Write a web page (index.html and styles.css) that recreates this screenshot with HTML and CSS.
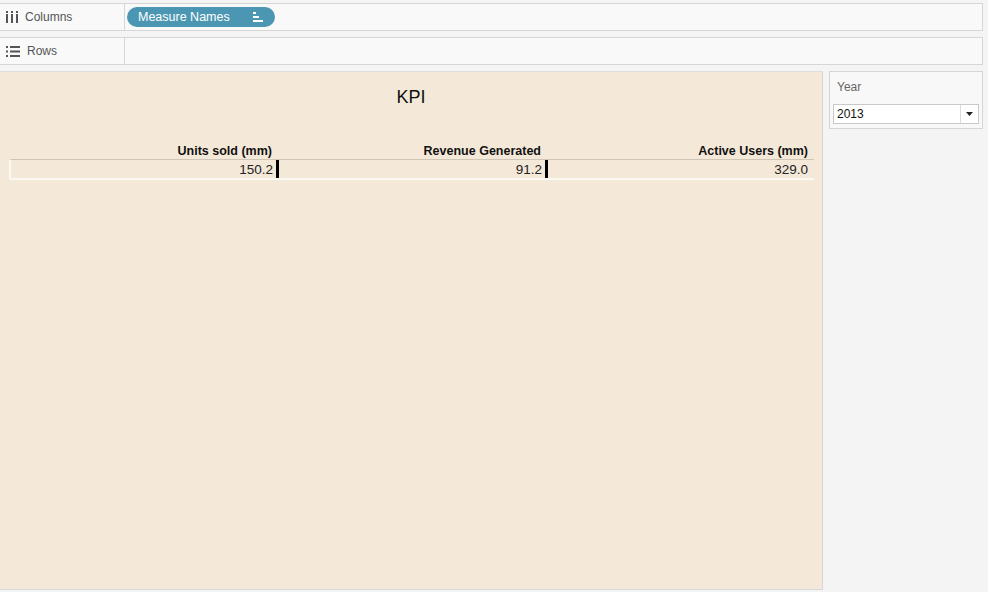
FILE: index.html
```html
<!DOCTYPE html>
<html>
<head>
<meta charset="utf-8">
<link rel="stylesheet" href="styles.css">
</head>
<body>
<div class="shelves">
  <div class="shelf">
    <div class="shelf-label">
      <svg class="shelf-icon" width="12" height="12" viewBox="0 0 12 12"><rect x="0" y="0" width="2" height="2" fill="#555"/><rect x="5" y="0" width="2" height="2" fill="#555"/><rect x="10" y="0" width="2" height="2" fill="#555"/><rect x="0" y="3" width="2" height="9" fill="#555"/><rect x="5" y="3" width="2" height="9" fill="#555"/><rect x="10" y="3" width="2" height="9" fill="#555"/></svg>
      <span>Columns</span>
    </div>
    <div class="shelf-body">
      <div class="pill">
        <span>Measure Names</span>
        <svg class="sort-icon" width="10" height="10" viewBox="0 0 10 10"><rect x="0" y="0" width="3" height="2" fill="#fff"/><rect x="0" y="4" width="6" height="2" fill="#fff"/><rect x="0" y="8" width="10" height="2" fill="#fff"/></svg>
      </div>
    </div>
  </div>
  <div class="shelf">
    <div class="shelf-label">
      <svg class="shelf-icon" width="14" height="11" viewBox="0 0 14 11"><rect x="0" y="0" width="2" height="2" fill="#555"/><rect x="4" y="0" width="10" height="2" fill="#555"/><rect x="0" y="4.5" width="2" height="2" fill="#555"/><rect x="4" y="4.5" width="10" height="2" fill="#555"/><rect x="0" y="9" width="2" height="2" fill="#555"/><rect x="4" y="9" width="10" height="2" fill="#555"/></svg>
      <span>Rows</span>
    </div>
    <div class="shelf-body"></div>
  </div>
</div>
<div class="main">
  <div class="pane">
    <div class="title">KPI</div>
    <div class="table">
      <div class="headers">
        <div class="cell c1 head">Units sold (mm)</div>
        <div class="cell c2 head">Revenue Generated</div>
        <div class="cell c3 head">Active Users (mm)</div>
      </div>
      <div class="row">
        <div class="cell c1 val"><span>150.2</span><i class="bar"></i></div>
        <div class="cell c2 val"><span>91.2</span><i class="bar"></i></div>
        <div class="cell c3 val"><span class="last">329.0</span></div>
      </div>
    </div>
  </div>
  <div class="filter">
    <div class="filter-title">Year</div>
    <div class="select">
      <span class="select-value">2013</span>
      <span class="select-btn"><svg width="7" height="4" viewBox="0 0 7 4"><path d="M0 0 L7 0 L3.5 4 Z" fill="#222"/></svg></span>
    </div>
  </div>
</div>
</body>
</html>
```

FILE: styles.css
```css
* { box-sizing: border-box; }
html, body { margin: 0; padding: 0; }
body {
  background: #f4f4f4;
  font-family: "Liberation Sans", Arial, sans-serif;
  font-size: 12px;
  color: #333;
  width: 988px;
  height: 592px;
  overflow: hidden;
}
.shelves {
  padding-top: 3px;
  display: flex;
  flex-direction: column;
  gap: 6px;
}
.shelf {
  width: 983px;
  height: 28px;
  border: 1px solid #d6d6d6;
  border-left: none;
  background: #f9f9f9;
  display: flex;
}
.shelf-label {
  width: 125px;
  border-right: 1px solid #d6d6d6;
  display: flex;
  align-items: center;
  gap: 7px;
  padding-left: 6px;
  color: #555;
}
.shelf-label span { color: #555; font-size: 12px; }
.shelf-body {
  flex: 1;
  display: flex;
  align-items: center;
  padding-left: 2px;
}
.pill {
  width: 148px;
  height: 20px;
  border-radius: 10px;
  background: #4b97b3;
  color: #fff;
  display: flex;
  align-items: center;
  padding-left: 11px;
  font-size: 12.5px;
}
.pill span { flex: 1; }
.sort-icon { margin-right: 12px; }
.main {
  margin-top: 6px;
  display: flex;
  align-items: flex-start;
  gap: 6px;
}
.pane {
  width: 823px;
  height: 519px;
  background: #f4e9d9;
  border-right: 1px solid #d6d6d6;
  border-bottom: 1px solid #d6d6d6;
  border-top: 1px solid #dedede;
}
.title {
  text-align: center;
  font-size: 18px;
  color: #111;
  padding-top: 15px;
  height: 40px;
}
.table {
  margin-top: 30px;
  margin-left: 9px;
  width: 805px;
}
.headers, .row {
  display: flex;
}
.headers { padding-left: 2px; }
.cell {
  display: flex;
  justify-content: flex-end;
  align-items: center;
}
.c1 { width: 267px; }
.c2 { width: 269px; }
.c3 { width: 267px; }
.head {
  font-weight: bold;
  color: #111;
  height: 17px;
  padding-right: 6px;
  font-size: 12.5px;
}
.row {
  height: 21px;
  border-top: 1px solid #cfc6b8;
  border-left: 2px solid #fbf8f2;
  border-bottom: 2px solid #fbf8f2;
}
.val {
  color: #222;
  height: 18px;
  font-size: 13.5px;
}
.val span { padding-right: 3px; }
.val span.last { padding-right: 6px; }
.bar {
  display: block;
  width: 3px;
  height: 18px;
  background: #000;
  margin-right: -1px;
}
.filter {
  width: 154px;
  height: 58px;
  border: 1px solid #d6d6d6;
  background: #f8f8f8;
  padding: 3px 3px 0 3px;
}
.filter-title {
  height: 29px;
  padding-left: 4px;
  padding-top: 5px;
  color: #666;
  font-size: 12px;
}
.select {
  height: 20px;
  background: #fff;
  border: 1px solid #c9c9c9;
  display: flex;
  align-items: center;
}
.select-value {
  flex: 1;
  padding-left: 3px;
  color: #111;
  font-size: 12px;
}
.select-btn {
  width: 18px;
  height: 100%;
  border-left: 1px solid #dcdcdc;
  display: flex;
  align-items: center;
  justify-content: center;
}
```
